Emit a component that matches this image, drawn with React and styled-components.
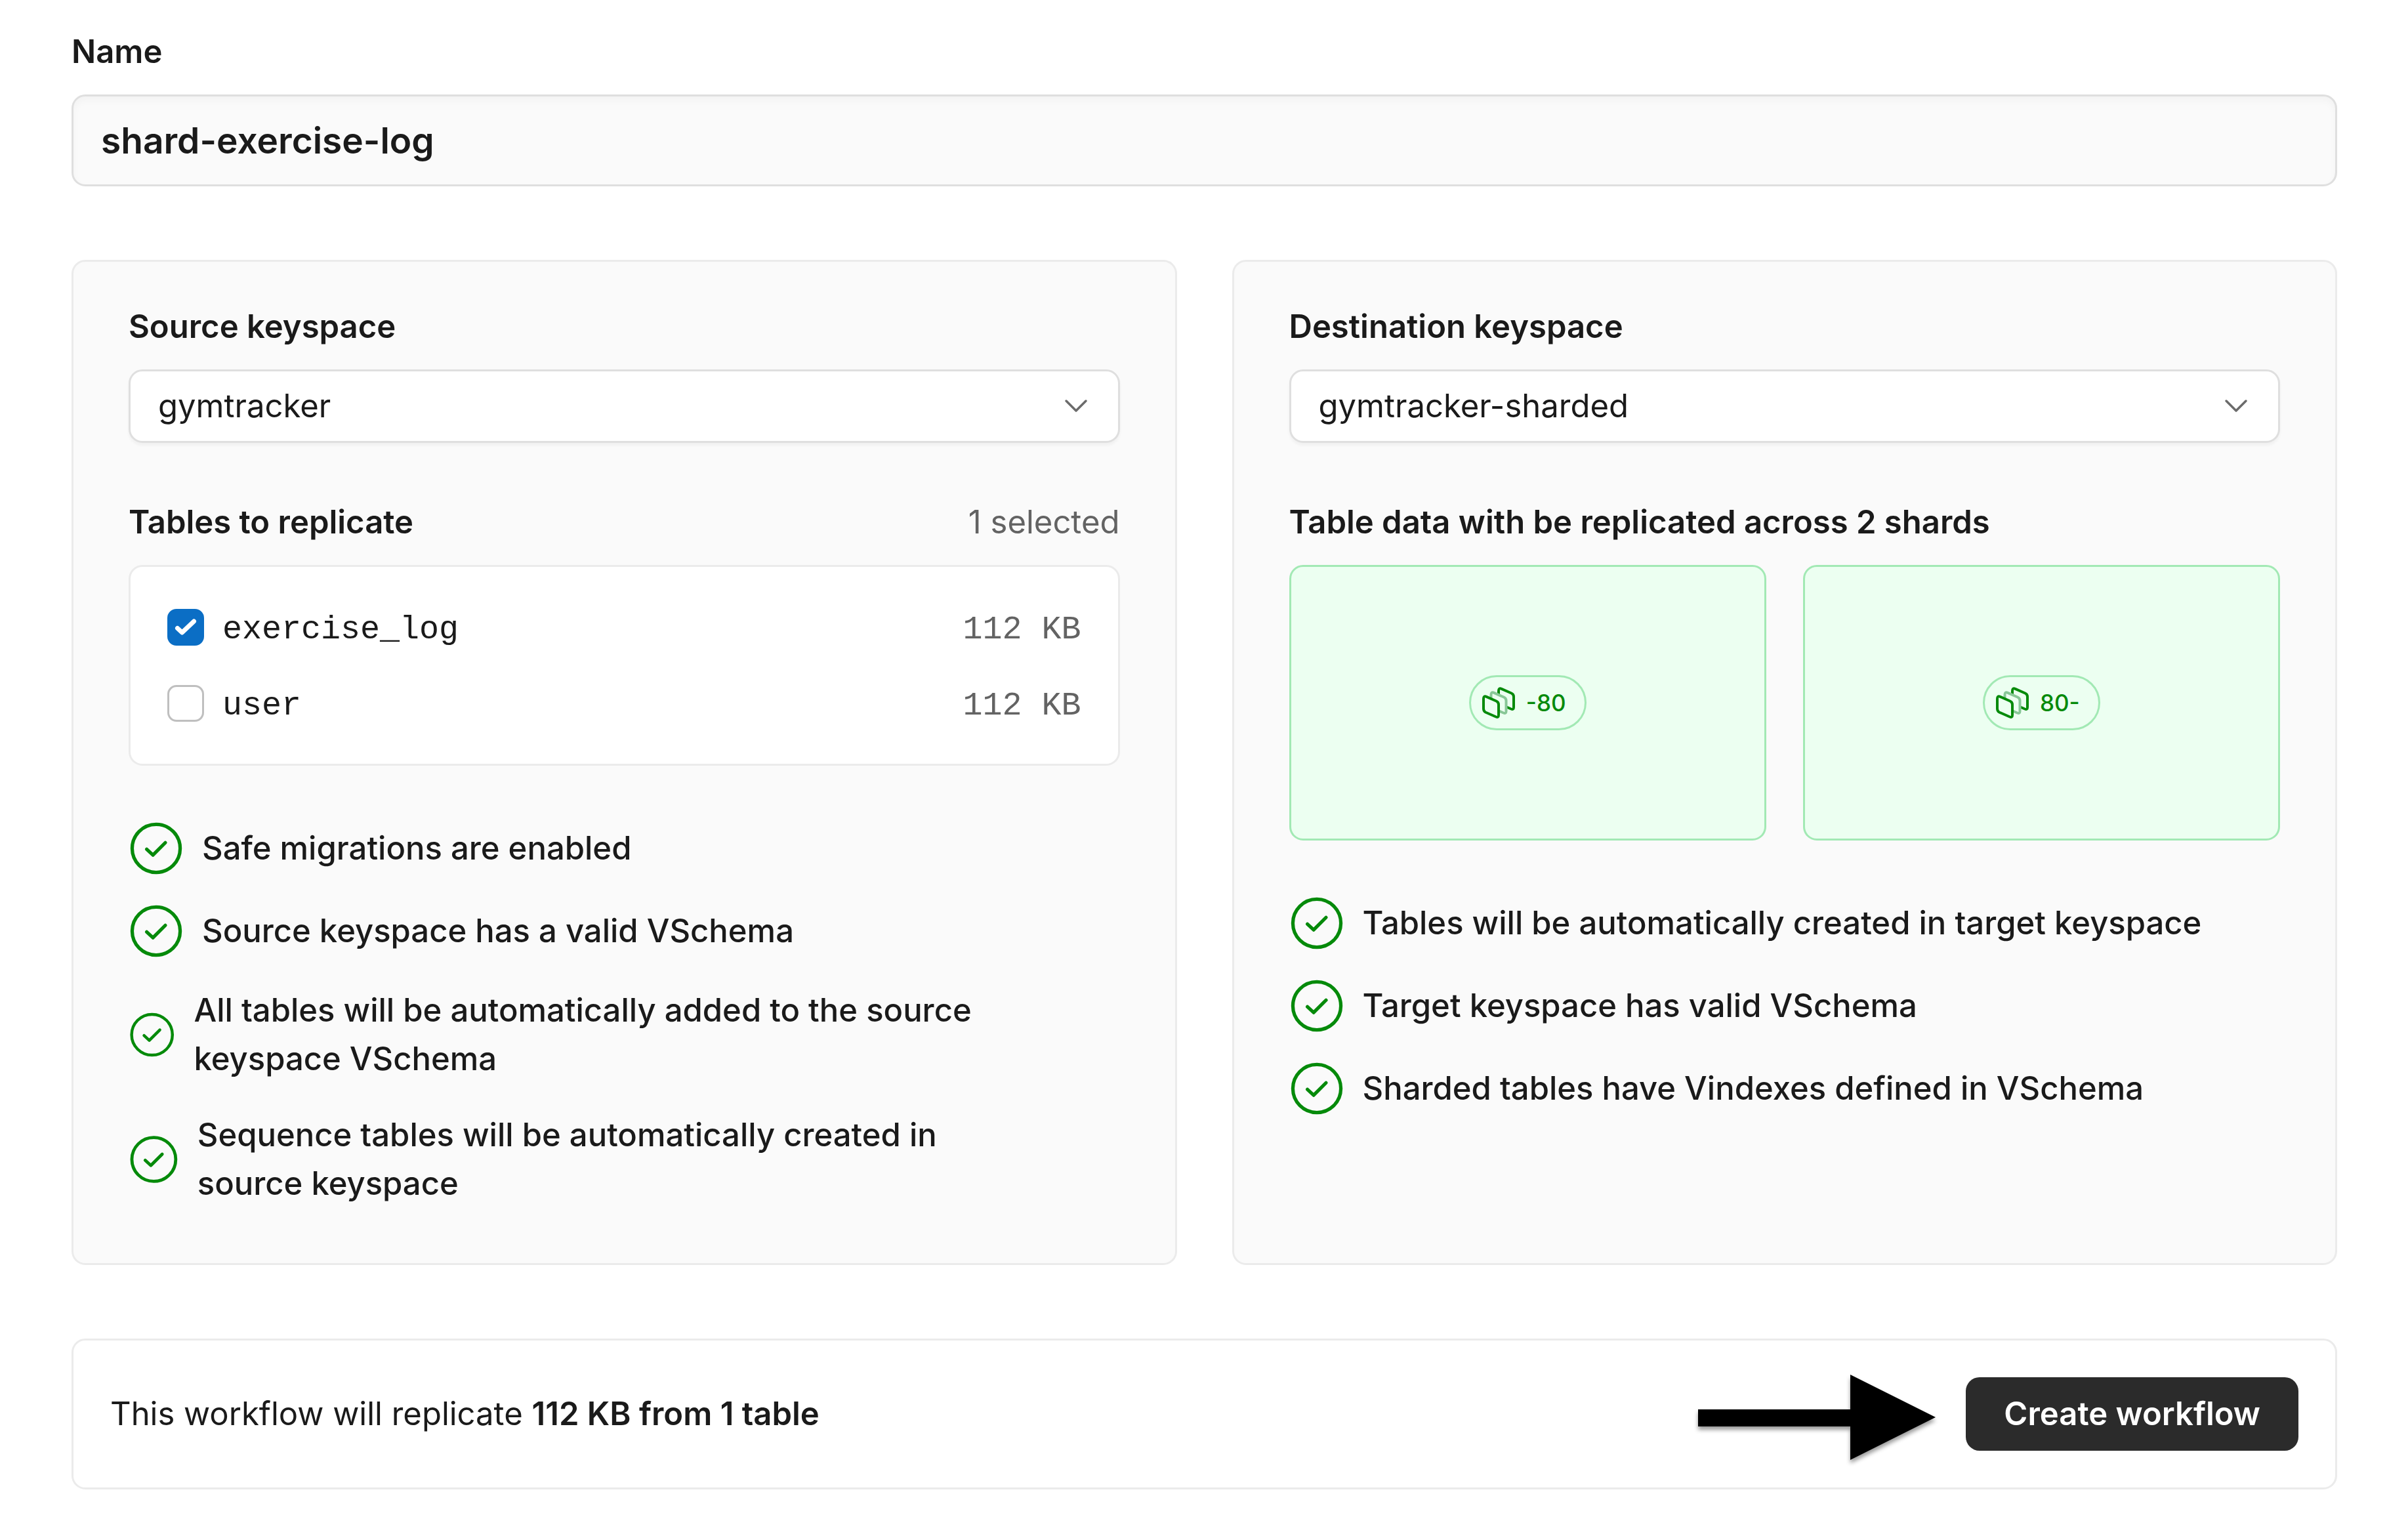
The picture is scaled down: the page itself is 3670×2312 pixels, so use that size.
import { useState } from "react";
import styled, { createGlobalStyle } from "styled-components";

const shards = ["-80", "80-"];

const sourceChecks = [
  "Safe migrations are enabled",
  "Source keyspace has a valid VSchema",
  "All tables will be automatically added to the source keyspace VSchema",
  "Sequence tables will be automatically created in source\u00a0keyspace",
];

const destinationChecks = [
  "Tables will be automatically created in target keyspace",
  "Target keyspace has valid VSchema",
  "Sharded tables have Vindexes defined in VSchema",
];

function CheckCircle() {
  return (
    <CheckIcon viewBox="0 0 24 24" aria-hidden="true">
      <circle cx="12" cy="12" r="10.45" />
      <path d="M7.9 12.4 10.6 14.9 16 9.5" />
    </CheckIcon>
  );
}

function ShardIcon() {
  return (
    <ShardSvg viewBox="0 0 56 56" aria-hidden="true">
      <path d="M28 10 Q28 5 32.5 6.8 L47.5 13.5 Q51 15 51 19 V35 Q51 39 47 37.5 L31 30.5 Q28 29 28 25 Z" />
      <path className="middle" d="M16.5 16 Q16.5 11 21 12.8 L36 19.5 Q39.5 21 39.5 25 V41 Q39.5 45 35.5 43.5 L19.5 36.5 Q16.5 35 16.5 31 Z" />
      <path d="M5 22 Q5 17 9.5 18.8 L24.5 25.5 Q28 27 28 31 V47 Q28 51 24 49.5 L8 42.5 Q5 41 5 37 Z" />
    </ShardSvg>
  );
}

function KeyspaceSelect({ id, label, options }) {
  return (
    <Field>
      <Label htmlFor={id}>{label}</Label>
      <SelectWrap>
        <select id={id}>
          {options.map((option) => (
            <option key={option}>{option}</option>
          ))}
        </select>
        <svg viewBox="0 0 38 22" aria-hidden="true">
          <path d="M4 3 19 18 34 3" />
        </svg>
      </SelectWrap>
    </Field>
  );
}

function CheckList({ items }) {
  return (
    <Checks>
      {items.map((item) => (
        <li key={item}>
          <CheckCircle />
          <span>{item}</span>
        </li>
      ))}
    </Checks>
  );
}

export default function App() {
  const [name, setName] = useState("shard-exercise-log");
  const [tables, setTables] = useState([
    { name: "exercise_log", size: 112, selected: true },
    { name: "user", size: 112, selected: false },
  ]);

  const toggleTable = (tableName) => {
    setTables(
      tables.map((table) =>
        table.name === tableName
          ? { ...table, selected: !table.selected }
          : table
      )
    );
  };

  const selected = tables.filter((table) => table.selected);
  const total = selected.reduce((sum, table) => sum + table.size, 0);

  return (
    <Page>
      <GlobalStyle />
      <Field>
        <Label htmlFor="name">Name</Label>
        <NameInput
          id="name"
          type="text"
          value={name}
          onChange={(e) => setName(e.target.value)}
        />
      </Field>
      <Panels>
        <Panel>
          <KeyspaceSelect
            id="source"
            label="Source keyspace"
            options={["gymtracker", "gymtracker-sharded"]}
          />
          <Field>
            <FieldHeader>
              <Heading>Tables to replicate</Heading>
              <Muted>{selected.length} selected</Muted>
            </FieldHeader>
            <TableBox>
              <table>
                <tbody>
                  {tables.map((table) => (
                    <tr key={table.name}>
                      <td>
                        <TableLabel>
                          <Checkbox>
                            <input
                              type="checkbox"
                              checked={table.selected}
                              onChange={() => toggleTable(table.name)}
                            />
                            {table.selected && (
                              <svg viewBox="0 0 56 56" aria-hidden="true">
                                <path d="M15.5 29.5 22.5 36 40.5 19" />
                              </svg>
                            )}
                          </Checkbox>
                          <span>
                            <Mono>{table.name}</Mono>
                          </span>
                        </TableLabel>
                      </td>
                      <td className="size">
                        <Mono>{table.size} KB</Mono>
                      </td>
                    </tr>
                  ))}
                </tbody>
              </table>
            </TableBox>
          </Field>
          <CheckList items={sourceChecks} />
        </Panel>
        <Panel>
          <KeyspaceSelect
            id="destination"
            label="Destination keyspace"
            options={["gymtracker-sharded", "gymtracker"]}
          />
          <Field>
            <Heading>
              Table data with be replicated across {shards.length} shards
            </Heading>
            <Shards>
              {shards.map((shard) => (
                <Shard key={shard}>
                  <Pill>
                    <ShardIcon />
                    {shard}
                  </Pill>
                </Shard>
              ))}
            </Shards>
          </Field>
          <CheckList items={destinationChecks} />
        </Panel>
      </Panels>
      <Summary>
        <p>
          This workflow will replicate{" "}
          <strong>
            {total} KB from {selected.length} table
          </strong>
        </p>
        <Action>
          <Arrow viewBox="0 0 362 130" aria-hidden="true">
            <path d="M0 53H232V0L362 65 232 130V79H0Z" />
          </Arrow>
          <CreateButton type="button">Create workflow</CreateButton>
        </Action>
      </Summary>
    </Page>
  );
}

const GlobalStyle = createGlobalStyle`
  * {
    box-sizing: border-box;
  }
  body {
    margin: 0;
    background-color: #ffffff;
    color: #1a1a1a;
    font-family: Inter, "Liberation Sans", sans-serif;
    font-size: 49px;
    line-height: 74px;
  }
  input, select, button {
    margin: 0;
    color: inherit;
    font: inherit;
  }
  p, h2, ul {
    margin: 0;
    padding: 0;
  }
`;

const Page = styled.main`
  display: flex;
  flex-direction: column;
  gap: 112px;
  padding: 42px 108px 42px 109px;
`;

const Field = styled.div`
  display: flex;
  flex-direction: column;
  gap: 28px;
`;

const FieldHeader = styled.div`
  display: flex;
  justify-content: space-between;
`;

const Label = styled.label`
  font-weight: 600;
`;

const Heading = styled.h2`
  font-size: 49px;
  font-weight: 600;
`;

const Muted = styled.span`
  color: #636363;
`;

const NameInput = styled.input`
  width: 100%;
  height: 140px;
  padding: 0 42px;
  border: 3px solid #dfdfdf;
  border-radius: 21px;
  background-color: #fafafa;
  box-shadow: inset 0 6px 12px rgba(0, 0, 0, 0.03);
  font-size: 55px;
  font-weight: 600;
`;

const Panels = styled.div`
  display: grid;
  grid-template-columns: 1fr 1fr;
  gap: 84px;
`;

const Panel = styled.section`
  display: flex;
  flex-direction: column;
  gap: 84px;
  min-width: 0;
  padding: 62px 84px 84px;
  border: 3px solid #ebebeb;
  border-radius: 21px;
  background-color: #fafafa;
`;

const SelectWrap = styled.div`
  display: grid;
  align-items: center;
  select,
  svg {
    grid-area: 1 / 1;
  }
  select {
    width: 100%;
    height: 112px;
    padding: 0 42px;
    appearance: none;
    border: 3px solid #dfdfdf;
    border-radius: 21px;
    background-color: #ffffff;
    box-shadow: 0 4px 4px rgba(0, 0, 0, 0.04);
  }
  svg {
    justify-self: end;
    width: 38px;
    height: 22px;
    margin-right: 48px;
    pointer-events: none;
    fill: none;
    stroke: #6b6b6b;
    stroke-width: 3.5;
    stroke-linecap: round;
    stroke-linejoin: round;
  }
`;

const TableBox = styled.div`
  padding: 34px 56px;
  border: 3px solid #ebebeb;
  border-radius: 21px;
  background-color: #ffffff;
  table {
    width: 100%;
    border-collapse: collapse;
  }
  td {
    height: 116px;
    padding: 0;
  }
  .size {
    color: #636363;
    text-align: right;
  }
`;

const Mono = styled.span`
  font-family: "Liberation Mono", monospace;
  font-size: 50px;
  line-height: 1;
`;

const TableLabel = styled.label`
  display: flex;
  align-items: center;
  gap: 28px;
`;

const Checkbox = styled.span`
  display: grid;
  input,
  svg {
    grid-area: 1 / 1;
    width: 56px;
    height: 56px;
  }
  input {
    appearance: none;
    border: 3px solid #bfbfbf;
    border-radius: 14px;
    background-color: #ffffff;
    &:checked {
      border-color: #0b6ec5;
      background-color: #0b6ec5;
    }
  }
  svg {
    pointer-events: none;
    fill: none;
    stroke: #ffffff;
    stroke-width: 7;
    stroke-linecap: round;
    stroke-linejoin: round;
  }
`;

const Checks = styled.ul`
  display: flex;
  flex-direction: column;
  gap: 42px;
  list-style: none;
  font-weight: 500;
  li {
    display: flex;
    align-items: center;
    gap: 28px;
  }
`;

const CheckIcon = styled.svg`
  width: 84px;
  height: 84px;
  fill: none;
  stroke: #058a0a;
  stroke-width: 1.5;
  stroke-linecap: round;
  stroke-linejoin: round;
`;

const Shards = styled.div`
  display: grid;
  grid-template-columns: 1fr 1fr;
  gap: 56px;
`;

const Shard = styled.div`
  display: flex;
  align-items: center;
  justify-content: center;
  height: 420px;
  border: 3px solid #a2e9b4;
  border-radius: 21px;
  background-color: #ecfff1;
`;

const Pill = styled.span`
  display: flex;
  align-items: center;
  gap: 14px;
  height: 84px;
  padding: 0 28px 0 14px;
  border: 3px solid #a2e9b4;
  border-radius: 42px;
  color: #058a0a;
  font-size: 35px;
  font-weight: 500;
`;

const ShardSvg = styled.svg`
  width: 56px;
  height: 56px;
  fill: #ecfff1;
  stroke: #058a0a;
  stroke-width: 4;
  stroke-linejoin: round;
  .middle {
    stroke: #88c797;
  }
`;

const Summary = styled.footer`
  display: flex;
  align-items: center;
  justify-content: space-between;
  padding: 56px;
  border: 3px solid #ebebeb;
  border-radius: 21px;
  strong {
    font-weight: 600;
  }
`;

const Action = styled.div`
  position: relative;
`;

const Arrow = styled.svg`
  position: absolute;
  top: -4px;
  right: calc(100% + 46px);
  width: 362px;
  height: 130px;
  overflow: visible;
  filter: drop-shadow(0 5px 3px rgba(0, 0, 0, 0.4));
`;

const CreateButton = styled.button`
  height: 112px;
  padding: 0 58px;
  border: none;
  border-radius: 21px;
  background-color: #2b2b2b;
  color: #ffffff;
  font-weight: 600;
  cursor: pointer;
`;
